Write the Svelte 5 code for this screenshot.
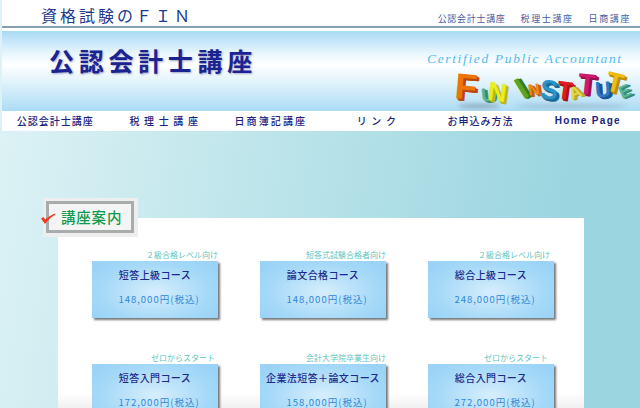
<script>
	const topLinks = ['公認会計士講座', '税理士講座', '日商講座'];

	const navItems = [
		{ label: '公認会計士講座', kind: '' },
		{ label: '税理士講座', kind: 'spaced' },
		{ label: '日商簿記講座', kind: 'mid' },
		{ label: 'リンク', kind: 'spaced' },
		{ label: 'お申込み方法', kind: '' },
		{ label: 'Home Page', kind: 'latin' }
	];

	const courses = [
		{ note: '２級合格レベル向け', inset: 0, title: '短答上級コース', price: '148,000円(税込)' },
		{ note: '短答式試験合格者向け', inset: 0, title: '論文合格コース', price: '148,000円(税込)' },
		{ note: '２級合格レベル向け', inset: 4, title: '総合上級コース', price: '248,000円(税込)' },
		{ note: 'ゼロからスタート', inset: 3, title: '短答入門コース', price: '172,000円(税込)' },
		{ note: '会計大学院卒業生向け', inset: 0, title: '企業法短答＋論文コース', price: '158,000円(税込)' },
		{ note: 'ゼロからスタート', inset: 6, title: '総合入門コース', price: '272,000円(税込)' }
	];

	// 3D logo letters: x, y inside the logo box, size, rotation, face and side colour
	const logo = [
		{ c: 'F', x: 3, y: -1, s: 36, r: 5, face: '#ee7308', side: '#b9480f' },
		{ c: 'U', x: 29, y: 15, s: 19, r: -6, face: '#58b49c', side: '#3a8a78' },
		{ c: 'N', x: 36, y: 9, s: 26, r: 8, face: '#ecec20', side: '#b8b818' },
		{ c: 'I', x: 65, y: 3, s: 31, r: -32, face: '#5ba526', side: '#3c7a18' },
		{ c: 'N', x: 76, y: 12, s: 16, r: -8, face: '#ee8a1c', side: '#c0640c' },
		{ c: 'S', x: 88, y: 7, s: 27, r: 6, face: '#2b93c8', side: '#1c6a98' },
		{ c: 'T', x: 105, y: 8, s: 25, r: 8, face: '#e01c22', side: '#a81218' },
		{ c: 'A', x: 117, y: 14, s: 17, r: -24, face: '#e6d64a', side: '#b8a82c' },
		{ c: 'T', x: 126, y: 0, s: 29, r: 6, face: '#cc1a6c', side: '#981050' },
		{ c: 'U', x: 143, y: 9, s: 22, r: -4, face: '#2f78c6', side: '#1f5494' },
		{ c: 'T', x: 154, y: -1, s: 28, r: 14, face: '#eebc12', side: '#b88c0c' },
		{ c: 'E', x: 167, y: 13, s: 17, r: -24, face: '#58b89c', side: '#3a8a74' }
	];
</script>

<div class="page">
	<header class="topbar">
		<div class="site-name">資格試験のＦＩＮ</div>
		<div class="top-links">
			{#each topLinks as link}
				<a href="#top">{link}</a>
			{/each}
		</div>
	</header>

	<div class="banner">
		<h1>公認会計士講座</h1>
		<div class="banner-right">
			<p class="tagline">Certified Public Accountant</p>
			<div class="logo">
				{#each logo as l}
					<span
						class="letter"
						style="left:{l.x}px;top:{l.y}px;font-size:{l.s}px;color:{l.face};transform:rotate({l.r}deg);text-shadow:1px 1px 0 {l.side},2px 2px 0 {l.side},3px 2px 0 {l.side}"
					>{l.c}</span>
				{/each}
				<div class="logo-shadow left"></div>
				<div class="logo-shadow right"></div>
			</div>
		</div>
	</div>

	<nav class="nav">
		{#each navItems as item}
			<a href="#top" class={item.kind}>{item.label}</a>
		{/each}
	</nav>

	<main class="content">
		<div class="label">
			<svg class="check" width="16" height="12" viewBox="0 0 16 12">
				<path d="M1 5.5 L5 11 C8 7 11 4 15.5 1.5 L15 0.5 C11 2 8 4 5.2 6.5 L3.5 4 Z" fill="#f03a1c" />
			</svg>
			<div class="label-inner">講座案内</div>
		</div>

		<section class="panel">
			<div class="grid">
				{#each courses as course}
					<article class="course">
						<p class="note" style="padding-right:{course.inset}px">{course.note}</p>
						<div class="card">
							<h2>{course.title}</h2>
							<p class="price">{course.price}</p>
						</div>
					</article>
				{/each}
			</div>
		</section>
	</main>
</div>

<style>
	:global(body) {
		margin: 0;
		background: #fff;
	}

	.page {
		width: 640px;
		height: 408px;
		overflow: hidden;
		display: flex;
		flex-direction: column;
		padding-left: 2px;
		box-sizing: border-box;
		background: linear-gradient(100deg, #dff3f6 0%, #c2e7ec 35%, #9bd5e0 85%);
		font-family: 'Noto Sans CJK JP', 'Liberation Sans', sans-serif;
	}

	.topbar {
		height: 26px;
		flex: none;
		display: flex;
		justify-content: space-between;
		background: #fff;
		border-bottom: 2px solid #86a0b2;
		box-shadow: 0 3px 0 #fff;
	}

	.site-name {
		margin: 4px 0 0 39px;
		font-size: 16px;
		line-height: 22px;
		letter-spacing: 3px;
		color: #223a8c;
		white-space: nowrap;
	}

	.top-links {
		display: flex;
		gap: 15px;
		margin: 12px 9px 0 0;
		font-size: 9px;
		line-height: 13px;
		letter-spacing: 0.7px;
	}

	.top-links a {
		color: #4a5c9e;
		text-decoration: none;
	}

	.top-links a:not(:first-child) {
		letter-spacing: 1.6px;
	}

	.banner {
		margin-top: 3px;
		height: 80px;
		flex: none;
		display: flex;
		justify-content: space-between;
		background: linear-gradient(#a8daf5 0%, #e8f6fd 28%, #fff 42%, #e4f4fc 62%, #acdcf5 100%);
	}

	h1 {
		margin: 12px 0 0 47px;
		font-size: 25px;
		line-height: 34px;
		font-weight: 700;
		letter-spacing: 4.7px;
		color: #1a2390;
		text-shadow: 1px 1px 2px rgba(60, 70, 130, 0.45);
		white-space: nowrap;
	}

	.banner-right {
		width: 214px;
		display: flex;
		flex-direction: column;
	}

	.tagline {
		margin: 20px 0 0 1px;
		font-family: 'Liberation Serif', serif;
		font-style: italic;
		font-size: 13.5px;
		line-height: 16px;
		letter-spacing: 1.65px;
		white-space: nowrap;
		color: #52bbf0;
	}

	.logo {
		position: relative;
		width: 180px;
		height: 37px;
		margin: 3px 0 0 26px;
	}

	.letter {
		position: absolute;
		font-family: 'Liberation Sans', sans-serif;
		font-weight: 700;
		line-height: 1;
		z-index: 1;
	}

	.logo-shadow {
		position: absolute;
		top: 34px;
		height: 4px;
		background: rgba(90, 100, 110, 0.45);
		border-radius: 50%;
		filter: blur(2px);
	}

	.logo-shadow.left {
		left: 6px;
		width: 42px;
	}

	.logo-shadow.right {
		left: 64px;
		width: 112px;
		background: rgba(90, 100, 110, 0.28);
	}

	.nav {
		height: 20px;
		flex: none;
		display: grid;
		grid-template-columns: repeat(6, 1fr);
		align-items: center;
		justify-items: center;
		background: #fff;
	}

	.nav a {
		font-size: 10px;
		line-height: 20px;
		letter-spacing: 1px;
		font-weight: 500;
		color: #1a2480;
		text-decoration: none;
		white-space: nowrap;
	}

	.nav a.spaced {
		letter-spacing: 4.6px;
		padding-left: 9px;
	}

	.nav a.mid {
		letter-spacing: 2.1px;
		padding-left: 6px;
	}

	.nav a.latin {
		font-family: 'Liberation Sans', sans-serif;
		font-weight: 700;
		font-size: 10px;
		letter-spacing: 1.3px;
		padding-left: 2px;
	}

	.content {
		position: relative;
		flex: 1;
		padding: 87px 56px 0 56px;
		min-height: 0;
		display: flex;
	}

	.label {
		position: absolute;
		left: 41px;
		top: 67px;
		width: 95px;
		height: 39px;
		box-sizing: border-box;
		padding: 3px;
		background: #eeeeee;
		z-index: 1;
	}

	.check {
		position: absolute;
		left: -3px;
		top: 15px;
		z-index: 1;
	}

	.label-inner {
		width: 88px;
		height: 32px;
		box-sizing: border-box;
		border: 3px solid #a8acac;
		background: #f4f4f4;
		padding-left: 12px;
		font-size: 14.5px;
		line-height: 25px;
		letter-spacing: 0.8px;
		font-weight: 500;
		color: #0c9c50;
		white-space: nowrap;
	}

	.panel {
		flex: 1;
		background: linear-gradient(#fff 0, #fff 175px, #f0f0f0 100%);
		padding: 32px 30px 0 34px;
		box-sizing: border-box;
		overflow: hidden;
	}

	.grid {
		display: grid;
		grid-template-columns: repeat(3, 126px);
		column-gap: 42px;
		row-gap: 35px;
	}

	.note {
		margin: 0 0 2px;
		text-align: right;
		font-size: 8px;
		line-height: 9px;
		color: #5cc4c0;
		white-space: nowrap;
	}

	.card {
		height: 57px;
		box-sizing: border-box;
		padding-top: 6px;
		text-align: center;
		background: radial-gradient(ellipse 60% 70% at 50% 55%, #d6eefc 0%, #a6d9f8 70%, #9ad3f7 100%);
		box-shadow: 2px 2px 2px #777;
	}

	h2 {
		margin: 0;
		font-size: 10px;
		line-height: 16px;
		font-weight: 500;
		letter-spacing: 0.4px;
		color: #1c2a8c;
		white-space: nowrap;
	}

	.price {
		margin: 9px 0 0;
		padding-left: 8px;
		font-size: 9.5px;
		line-height: 14px;
		letter-spacing: 1px;
		color: #2e88d8;
		white-space: nowrap;
	}
</style>
